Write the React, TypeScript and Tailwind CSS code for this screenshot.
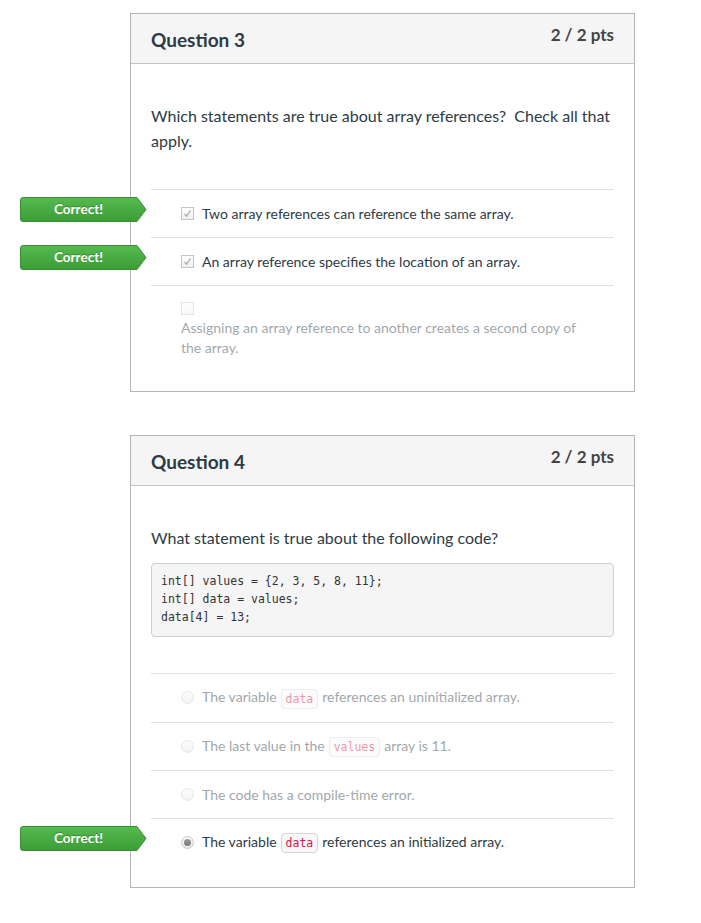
import React from 'react';

type Answer = {
  text: React.ReactNode;
  selected: boolean;
  correct?: boolean;
  wrap?: boolean;
};

const CorrectTag = () => (
  <div className="absolute left-[-131px] top-[7px] w-[127px] h-[25px] z-10">
    <svg width="127" height="25" viewBox="0 0 127 25" className="absolute inset-0">
      <defs>
        <linearGradient id="tagGrad" x1="0" y1="0" x2="0" y2="1">
          <stop offset="0" stopColor="#56bb4f" />
          <stop offset="1" stopColor="#3c9c37" />
        </linearGradient>
      </defs>
      <path
        d="M3,0.5 H117 L126,12.5 L117,24.5 H3 Q0.5,24.5 0.5,22 V3 Q0.5,0.5 3,0.5 Z"
        fill="url(#tagGrad)"
        stroke="#3a8f35"
        strokeWidth="1"
      />
    </svg>
    <div className="relative w-[117px] h-[25px] flex items-center justify-center text-white font-bold text-[13.5px] [text-shadow:0_-1px_0_rgba(0,0,0,0.25)]">
      Correct!
    </div>
  </div>
);

const Checkbox = ({ checked }: { checked: boolean }) => (
  <span className="flex w-[13px] h-[13px] shrink-0 border border-[#c6c6c6] bg-gradient-to-b from-[#fdfdfd] to-[#efefef] items-center justify-center">
    {checked && (
      <svg width="9" height="9" viewBox="0 0 9 9">
        <path d="M1.5,5 L3.5,7.2 L7.6,1.4" fill="none" stroke="#b0b0b0" strokeWidth="1.3" />
      </svg>
    )}
  </span>
);

const Radio = ({ checked }: { checked: boolean }) => (
  <span className="flex w-[13px] h-[13px] shrink-0 rounded-full border border-[#c9c9c9] bg-gradient-to-b from-[#fafafa] to-[#e6e6e6] items-center justify-center">
    {checked && <span className="w-[7px] h-[7px] rounded-full bg-gradient-to-b from-[#9a9a9a] to-[#7a7a7a]" />}
  </span>
);

const Code = ({ children }: { children: React.ReactNode }) => (
  <code className="inline-block mx-[4px] px-[4px] leading-[18px] rounded-[4px] border border-[#d6d6d6] bg-[#f7f7f9] text-[#dd1144] text-[11.5px] font-['DejaVu_Sans_Mono',monospace] align-middle">
    {children}
  </code>
);

const AnswerRow = ({ a, kind, tall }: { a: Answer; kind: 'check' | 'radio'; tall?: boolean }) => {
  const control = kind === 'check' ? <Checkbox checked={a.selected} /> : <Radio checked={a.selected} />;
  const faded = a.selected ? 'text-[#2d3b45]' : 'text-[#2d3b45] opacity-[0.45]';
  if (a.wrap) {
    return (
      <div className="relative border-t border-[#e2e2e2] pl-[30px] pt-4 pb-[13px]">
        <div className={`flex flex-col ${faded}`}>
          <div className="flex mb-[3px]">{control}</div>
          <div className="max-w-[410px] text-[14px] leading-[20px]">{a.text}</div>
        </div>
        {a.correct && <CorrectTag />}
      </div>
    );
  }
  return (
    <div className={`relative border-t border-[#e2e2e2] ${tall ? 'h-[49px]' : 'h-[48px]'} pl-[30px] flex items-center`}>
      <div className={`flex items-center ${faded}`}>
        {control}
        <span className="ml-[8px] text-[14px] leading-[20px]">{a.text}</span>
      </div>
      {a.correct && <CorrectTag />}
    </div>
  );
};

const QuestionCard = ({
  title,
  children,
  bodyClass = 'pb-5',
}: {
  title: string;
  children: React.ReactNode;
  bodyClass?: string;
}) => (
  <div className="w-[505px] border border-[#b5b5b5] bg-white">
    <div className="h-[50px] bg-[#f5f5f5] border-b border-[#c4c4c4] px-5 flex items-start justify-between">
      <h2 className="pt-[14px] text-[19px] leading-[24px] font-bold text-[#2d3b45]">{title}</h2>
      <div className="pt-[11px] text-[17px] leading-[20px] font-bold text-[#444]">2 / 2 pts</div>
    </div>
    <div className={`px-5 pt-[39px] ${bodyClass}`}>{children}</div>
  </div>
);

export default function App() {
  const q3: Answer[] = [
    { text: 'Two array references can reference the same array.', selected: true, correct: true },
    { text: 'An array reference specifies the location of an array.', selected: true, correct: true },
    {
      text: 'Assigning an array reference to another creates a second copy of the array.',
      selected: false,
      wrap: true,
    },
  ];

  const q4: Answer[] = [
    {
      text: (
        <>
          The variable<Code>data</Code>references an uninitialized array.
        </>
      ),
      selected: false,
    },
    {
      text: (
        <>
          The last value in the<Code>values</Code>array is 11.
        </>
      ),
      selected: false,
    },
    { text: 'The code has a compile-time error.', selected: false },
    {
      text: (
        <>
          The variable<Code>data</Code>references an initialized array.
        </>
      ),
      selected: true,
      correct: true,
    },
  ];

  return (
    <div className="min-h-[923px] bg-white font-['Lato','Noto_Sans',sans-serif] pl-[130px] pt-[13px] pb-8 flex flex-col gap-[43px]">
      <QuestionCard title="Question 3">
        <p className="text-[16px] leading-[25px] text-[#2d3b45]">
          Which statements are true about array references?&nbsp; Check all that apply.
        </p>
        <div className="mt-[36px]">
          {q3.map((a, i) => (
            <AnswerRow key={i} a={a} kind="check" />
          ))}
        </div>
      </QuestionCard>

      <QuestionCard title="Question 4" bodyClass="pb-[21px]">
        <p className="text-[16px] leading-[25px] text-[#2d3b45]">
          What statement is true about the following code?
        </p>
        <pre className="mt-[13px] rounded-[4px] border border-[#cfcfcf] bg-[#f5f5f5] px-[9px] pt-2 pb-[10px] text-[11.5px] leading-[18px] text-[#333] font-['DejaVu_Sans_Mono',monospace]">
          {'int[] values = {2, 3, 5, 8, 11};\nint[] data = values;\ndata[4] = 13;'}
        </pre>
        <div className="mt-[36px]">
          {q4.map((a, i) => (
            <AnswerRow key={i} a={a} kind="radio" tall={i === 0} />
          ))}
        </div>
      </QuestionCard>
    </div>
  );
}
